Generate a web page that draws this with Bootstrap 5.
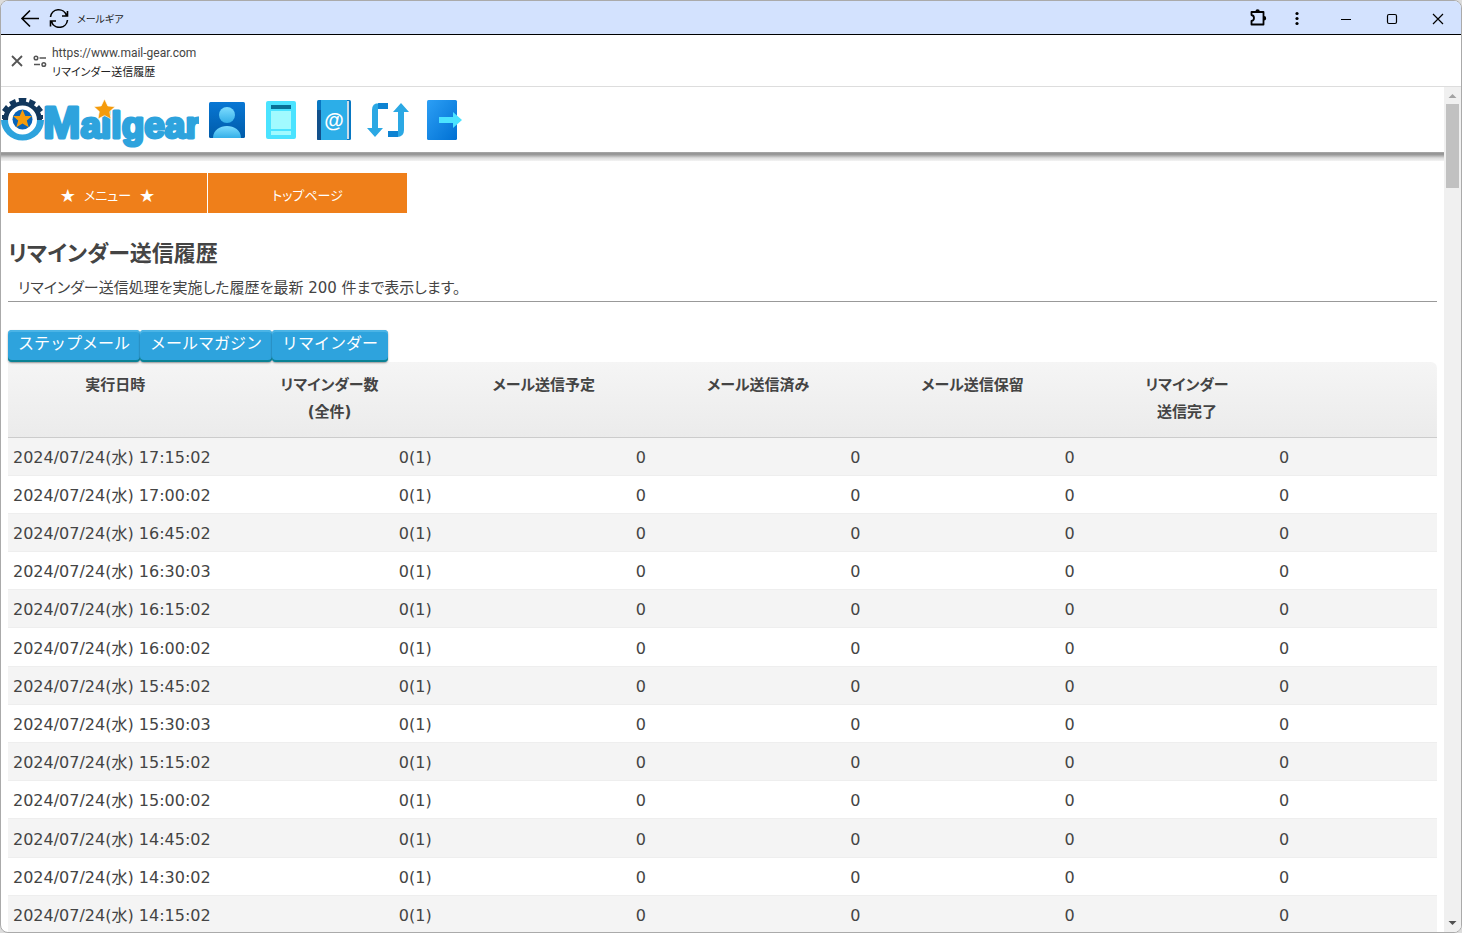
<!DOCTYPE html>
<html lang="ja">
<head>
<meta charset="utf-8">
<meta name="viewport" content="width=device-width, initial-scale=1">
<title>リマインダー送信履歴</title>
<link href="https://cdn.jsdelivr.net/npm/bootstrap@5.3.0/dist/css/bootstrap.min.css" rel="stylesheet">
<style>
  html { background: #dcdcdc; }
  body { font-family: "DejaVu Sans", "Noto Sans CJK JP", sans-serif; font-size: 16px; line-height: 27px; color: #444; background: #dcdcdc; }
  svg { display: block; }
  .app-window { background: #fff; border: 1px solid #aaa; border-radius: 8px; }
  .prop-kana { font-feature-settings: "palt"; }
  .title-bar { height: 34px; background: #d3e2fe; border-bottom: 1px solid #000; color: #222; font-size: 10px; line-height: 18px; padding-left: 18px; }
  .bare-btn { background: none; border: 0; padding: 0; color: #000; }
  .window-tools { padding-right: 13px; }
  .url-bar { height: 52px; border-bottom: 1px solid #ddd; padding-left: 9px; font: 12px/20px Roboto, "Noto Sans CJK JP", sans-serif; color: #444; }
  .url-title { font-size: 11px; color: #222; }
  .site-head { height: 65px; gap: 10px; }
  .head-rule { height: 9px; background: linear-gradient(#aaa 0, #909090 2px, #b4b4b4 4px, #ddd 6px, #f3f3f3 9px); }
  .page-body { padding: 12px 7px 0; }
  .menu-link { width: 199px; height: 40px; padding-top: 6px; background: #ef7f1a; color: #fff; text-align: center; text-decoration: none; font-size: 13px; line-height: 34px; }
  .menu-star { font-size: 18px; line-height: 20px; margin: 0 8px; }
  .menu-row { gap: 1px; }
  .page-title { font-size: 22px; line-height: 36px; font-weight: 700; margin: 23px 0 0; color: #444; }
  .page-note { padding: 1px 10px 0; margin: 2px 0 0; border-bottom: 1px solid #999; font-size: 15px; line-height: 26px; }
  .tab-row { margin-top: 28px; }
  .tab-btn { height: 32px; padding: 0 10px 4px; border: 0; border-radius: 4px; background: #2ea3dd; color: #fff; line-height: 28px; box-shadow: inset 0 2px #4bb4e6, inset 0 -2px #0b8294, 0 1px 2px rgba(0,0,0,.4); }
  .log-table { table-layout: fixed; margin: 0; color: #444; line-height: 27px; border-collapse: separate; border-spacing: 0; }
  .log-table thead { background: linear-gradient(#f5f5f5, #ebebeb); font-size: 15px; }
  .log-table th { text-align: center; vertical-align: top; padding: 10px 5px; height: 76px; border-bottom: 1px solid #ccc; background: none; }
  .log-table th:last-child { border-top-right-radius: 6px; }
  .log-table td { height: 38px; text-align: right; padding: 6px 5px 4px; border-bottom: 1px solid #eee; white-space: nowrap; }
  .log-table tr:nth-child(5n+6) td { height: 39px; }
  .log-table td:first-child { text-align: left; }
  .log-table tbody tr:nth-child(odd) { background: #f4f4f4; }
  .scroll-rail { width: 17px; background: #f0f0f0; }
  .scroll-thumb { width: 13px; height: 84px; margin: 0 auto; background: #c1c1c1; }
</style>
</head>
<body class="vh-100 overflow-hidden">
<div class="app-window h-100 d-flex flex-column overflow-hidden">
  <header class="title-bar d-flex align-items-center flex-shrink-0">
    <button class="bare-btn" type="button" aria-label="戻る"><svg width="22" height="20" viewBox="0 0 22 20" fill="none" stroke="#000" stroke-width="1.6"><path d="M20 10.500H3M11 2.500L3 10.500L11 18.500"/></svg></button>
    <button class="bare-btn ms-2" type="button" aria-label="更新"><svg width="20" height="20" viewBox="0 0 20 20" fill="none" stroke="#000" stroke-width="1.6"><path d="M1.500 9A8.200 8.200 0 0 1 17.500 7.500M18.500 12A8.200 8.200 0 0 1 2.500 13.500M18.500 3V8H13M1.500 18.500V13H7"/></svg></button>
    <span class="prop-kana ms-2 pt-1">メールギア</span>
    <div class="window-tools d-flex align-items-center ms-auto">
      <button class="bare-btn" type="button" aria-label="拡張機能"><svg width="22" height="20" viewBox="0 0 22 20"><path d="M3.500 4H15.500V16.500H3.500V13Q6 12.500 6 10T3.500 7Z" fill="none" stroke="#000" stroke-width="1.800" stroke-linejoin="round"/><path d="M7.400 3.500A2.200 2.200 0 0 1 11.800 3.500ZM16 8A2.200 2.200 0 0 1 16 12.400Z"/></svg></button>
      <button class="bare-btn ms-4" type="button" aria-label="メニュー"><svg width="18" height="20" viewBox="0 0 18 20"><circle cx="3" cy="5.500" r="1.600"/><circle cx="3" cy="10.500" r="1.600"/><circle cx="3" cy="15.500" r="1.600"/></svg></button>
      <button class="bare-btn ms-4" type="button" aria-label="最小化"><svg width="22" height="20" viewBox="0 0 22 20"><path d="M5 11.500H15" stroke="#000"/></svg></button>
      <button class="bare-btn ms-4" type="button" aria-label="最大化"><svg width="22" height="20" viewBox="0 0 22 20"><rect x="5.500" y="6.500" width="9" height="9" rx="1.500" fill="none" stroke="#000" stroke-width="1.200"/></svg></button>
      <button class="bare-btn ms-4" type="button" aria-label="閉じる"><svg width="20" height="20" viewBox="0 0 20 20"><path d="M5 6L15 16M15 6L5 16" stroke="#000" stroke-width="1.200"/></svg></button>
    </div>
  </header>
  <div class="url-bar d-flex align-items-center flex-shrink-0">
    <button class="bare-btn" type="button" aria-label="閉じる"><svg width="14" height="14" viewBox="0 0 14 14"><path d="M2 2L12 12M12 2L2 12" stroke="#555" stroke-width="1.800"/></svg></button>
    <svg class="ms-2 me-1" width="16" height="14" viewBox="0 0 16 14" fill="none" stroke="#555" stroke-width="1.500"><circle cx="4" cy="4" r="1.800"/><path d="M7.500 4H14M2 10.500H8"/><circle cx="11.800" cy="10.500" r="1.800"/></svg>
    <div class="pt-1"><div>https://www.mail-gear.com</div><div class="url-title prop-kana">リマインダー送信履歴</div></div>
  </div>
  <div class="d-flex flex-grow-1 overflow-hidden">
    <main class="flex-grow-1 overflow-hidden">
      <div class="site-head d-flex align-items-center">
        <a href="#" aria-label="Mailgear">
          <svg width="198" height="60" viewBox="0 0 198 60">
            <g fill="#12375c"><path d="M2 30A19.500 18.500 0 0 1 41 30H36A14.500 14.500 0 0 0 7 30Z"/><path d="M17.500 8h8l-1 6h-6zM8 12l6-3 2 6-5 2zM35 12l-6-3-2 6 5 2zM1 20l4-5 5 5-4 4zM42 20l-4-5-5 5 4 4zM1 25h6v4H1zM36 25h6v4h-6z"/></g>
            <path d="M0 30H7A14.500 14.500 0 0 0 36 30H43A21 20 0 0 1 0 30Z" fill="#2ea3dd"/>
            <circle cx="21.500" cy="29.500" r="10" fill="#0863b7"/>
            <path d="M21.500 19.500L24.300 26H31L25.800 30.500L27.700 37.300L21.500 33.500L15.300 37.300L17.200 30.500L12 26H18.700Z" fill="#f59b0b"/>
            <text x="42" y="48" font-family="Liberation Sans, sans-serif" font-size="37" font-weight="700" fill="#2ea3dd" stroke="#2ea3dd" stroke-width="3" stroke-linejoin="round"><tspan font-size="45">M</tspan>ailgear</text>
            <path d="M103.500 9L106.800 16L114 16.800L108.700 21.600L110 29L103.500 25.400L97 29L98.300 21.600L93 16.800L100.200 16Z" fill="#f59b0b" stroke="#fff" stroke-width=".6"/>
          </svg></a>
        <nav class="d-flex align-items-center gap-3">
          <a href="#" aria-label="ユーザー"><svg width="36" height="40" viewBox="0 0 36 40"><defs><linearGradient id="sky" x2="0" y2="1"><stop stop-color="#7ddcff"/><stop offset="1" stop-color="#34afe8"/></linearGradient><linearGradient id="deep" x2="0" y2="1"><stop stop-color="#0877d4"/><stop offset="1" stop-color="#005ba9"/></linearGradient><linearGradient id="door" x2="1" y2="1"><stop stop-color="#2c9ff5"/><stop offset="1" stop-color="#0070d3"/></linearGradient></defs><rect y="2" width="36" height="36" rx="1.500" fill="url(#deep)"/><circle cx="18" cy="15" r="8" fill="url(#sky)"/><path d="M4 38C4 22 32 22 32 38Z" fill="url(#sky)"/></svg></a>
          <a href="#" aria-label="メール"><svg width="40" height="40" viewBox="-4 0 40 40"><rect x="1" y="1" width="30" height="38" rx="2" fill="#4be3ff"/><path d="M6 5H26V9H6Z" fill="#087196"/><path d="M6 11H26V29H6ZM6 31H26V35H6Z" fill="#a1faff"/></svg></a>
          <a href="#" aria-label="アドレス帳"><svg width="34" height="40" viewBox="1 0 34 40"><rect x="1" width="34" height="40" rx="1.500" fill="#0877c2"/><path d="M1 10H5V40H2Q1 40 1 39Z" fill="#12508b"/><path d="M5 0H31V40H5Z" fill="#2caee8"/><path d="M32 1V39" stroke="#eee" stroke-width="1.700"/><text x="18" y="27" text-anchor="middle" font-family="Liberation Sans, sans-serif" font-size="20" font-weight="700" fill="#fff">@</text></svg></a>
          <a href="#" aria-label="更新"><svg width="44" height="40" viewBox="0 0 44 40"><path d="M11 3H21V9H11ZM21 31H31V37H21Z" fill="#0e83d2"/><path d="M12 3Q5 3 5 10V28H0L8 37L16 28H11V9V3ZM30 37Q37 37 37 30V12H42L34 3L26 12H31V37Z" fill="#2ba8e4"/></svg></a>
          <a href="#" aria-label="ログアウト"><svg width="36" height="40" viewBox="0 0 36 40"><rect width="30" height="40" rx="1.500" fill="url(#door)"/><path d="M12 17H26V12L35 20L26 28V23H12Z" fill="#4be3ff"/></svg></a>
        </nav>
      </div>
      <div class="head-rule"></div>
      <div class="page-body">
        <nav class="menu-row d-flex prop-kana">
          <a class="menu-link d-flex align-items-center justify-content-center" href="#"><span class="menu-star">★</span>メニュー<span class="menu-star">★</span></a>
          <a class="menu-link" href="#">トップページ</a>
        </nav>
        <h1 class="page-title prop-kana">リマインダー送信履歴</h1>
        <p class="page-note prop-kana">リマインダー送信処理を実施した履歴を最新 200 件まで表示します。</p>
        <div class="tab-row d-flex">
          <button class="tab-btn" type="button">ステップメール</button>
          <button class="tab-btn" type="button">メールマガジン</button>
          <button class="tab-btn" type="button">リマインダー</button>
        </div>
        <table class="log-table w-100">
          <colgroup><col style="width:15%"><col style="width:15%"><col style="width:15%"><col style="width:15%"><col style="width:15%"><col style="width:15%"><col style="width:10%"></colgroup>
          <thead class="prop-kana"><tr><th>実行日時</th><th>リマインダー数<br>(全件)</th><th>メール送信予定</th><th>メール送信済み</th><th>メール送信保留</th><th>リマインダー<br>送信完了</th><th></th></tr></thead>
          <tbody>
            <tr><td>2024/07/24(水) 17:15:02</td><td>0(1)</td><td>0</td><td>0</td><td>0</td><td>0</td><td></td></tr>
            <tr><td>2024/07/24(水) 17:00:02</td><td>0(1)</td><td>0</td><td>0</td><td>0</td><td>0</td><td></td></tr>
            <tr><td>2024/07/24(水) 16:45:02</td><td>0(1)</td><td>0</td><td>0</td><td>0</td><td>0</td><td></td></tr>
            <tr><td>2024/07/24(水) 16:30:03</td><td>0(1)</td><td>0</td><td>0</td><td>0</td><td>0</td><td></td></tr>
            <tr><td>2024/07/24(水) 16:15:02</td><td>0(1)</td><td>0</td><td>0</td><td>0</td><td>0</td><td></td></tr>
            <tr><td>2024/07/24(水) 16:00:02</td><td>0(1)</td><td>0</td><td>0</td><td>0</td><td>0</td><td></td></tr>
            <tr><td>2024/07/24(水) 15:45:02</td><td>0(1)</td><td>0</td><td>0</td><td>0</td><td>0</td><td></td></tr>
            <tr><td>2024/07/24(水) 15:30:03</td><td>0(1)</td><td>0</td><td>0</td><td>0</td><td>0</td><td></td></tr>
            <tr><td>2024/07/24(水) 15:15:02</td><td>0(1)</td><td>0</td><td>0</td><td>0</td><td>0</td><td></td></tr>
            <tr><td>2024/07/24(水) 15:00:02</td><td>0(1)</td><td>0</td><td>0</td><td>0</td><td>0</td><td></td></tr>
            <tr><td>2024/07/24(水) 14:45:02</td><td>0(1)</td><td>0</td><td>0</td><td>0</td><td>0</td><td></td></tr>
            <tr><td>2024/07/24(水) 14:30:02</td><td>0(1)</td><td>0</td><td>0</td><td>0</td><td>0</td><td></td></tr>
            <tr><td>2024/07/24(水) 14:15:02</td><td>0(1)</td><td>0</td><td>0</td><td>0</td><td>0</td><td></td></tr>
          </tbody>
        </table>
      </div>
    </main>
    <div class="scroll-rail d-flex flex-column flex-shrink-0" aria-hidden="true">
      <svg width="17" height="17" viewBox="0 0 17 17"><path d="M8.500 7L12.500 11H4.500Z" fill="#a3a3a3"/></svg>
      <div class="scroll-thumb"></div>
      <svg class="mt-auto" width="17" height="17" viewBox="0 0 17 17"><path d="M8.500 10L12.500 6H4.500Z" fill="#505050"/></svg>
    </div>
  </div>
</div>
<script src="https://cdn.jsdelivr.net/npm/bootstrap@5.3.0/dist/js/bootstrap.bundle.min.js"></script>
</body>
</html>
